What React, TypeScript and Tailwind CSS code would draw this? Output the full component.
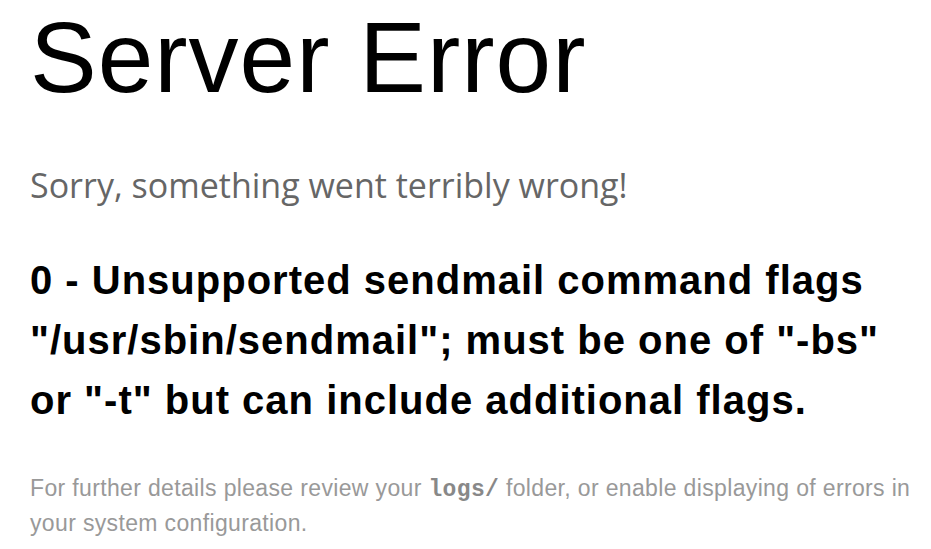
export default function App() {
  return (
    <main className="min-h-screen bg-white pl-[30px] pr-[15px] font-['Liberation_Sans',Arial,sans-serif]">
      <h1 className="text-[100px] font-normal leading-[115px] tracking-[1px] text-black">Server Error</h1>
      <p className="mt-[48px] font-['Open_Sans',sans-serif] text-[34px] font-normal leading-[44px] text-[#666]">
        Sorry, something went terribly wrong!
      </p>
      <h3 className="mt-[43px] text-[40px] font-bold leading-[60px] tracking-[1px] text-black">
        0 - Unsupported sendmail command flags "/usr/sbin/sendmail"; must be one of "-bs" or "-t" but can
        include additional flags.
      </h3>
      <p className="mt-[42px] text-[23px] leading-[33px] tracking-[0.35px] text-[#999]">
        For further details please review your{" "}
        <code className="font-['Liberation_Mono',monospace] font-bold text-[#888]">logs/</code> folder, or
        enable displaying of errors in your system configuration.
      </p>
    </main>
  );
}
